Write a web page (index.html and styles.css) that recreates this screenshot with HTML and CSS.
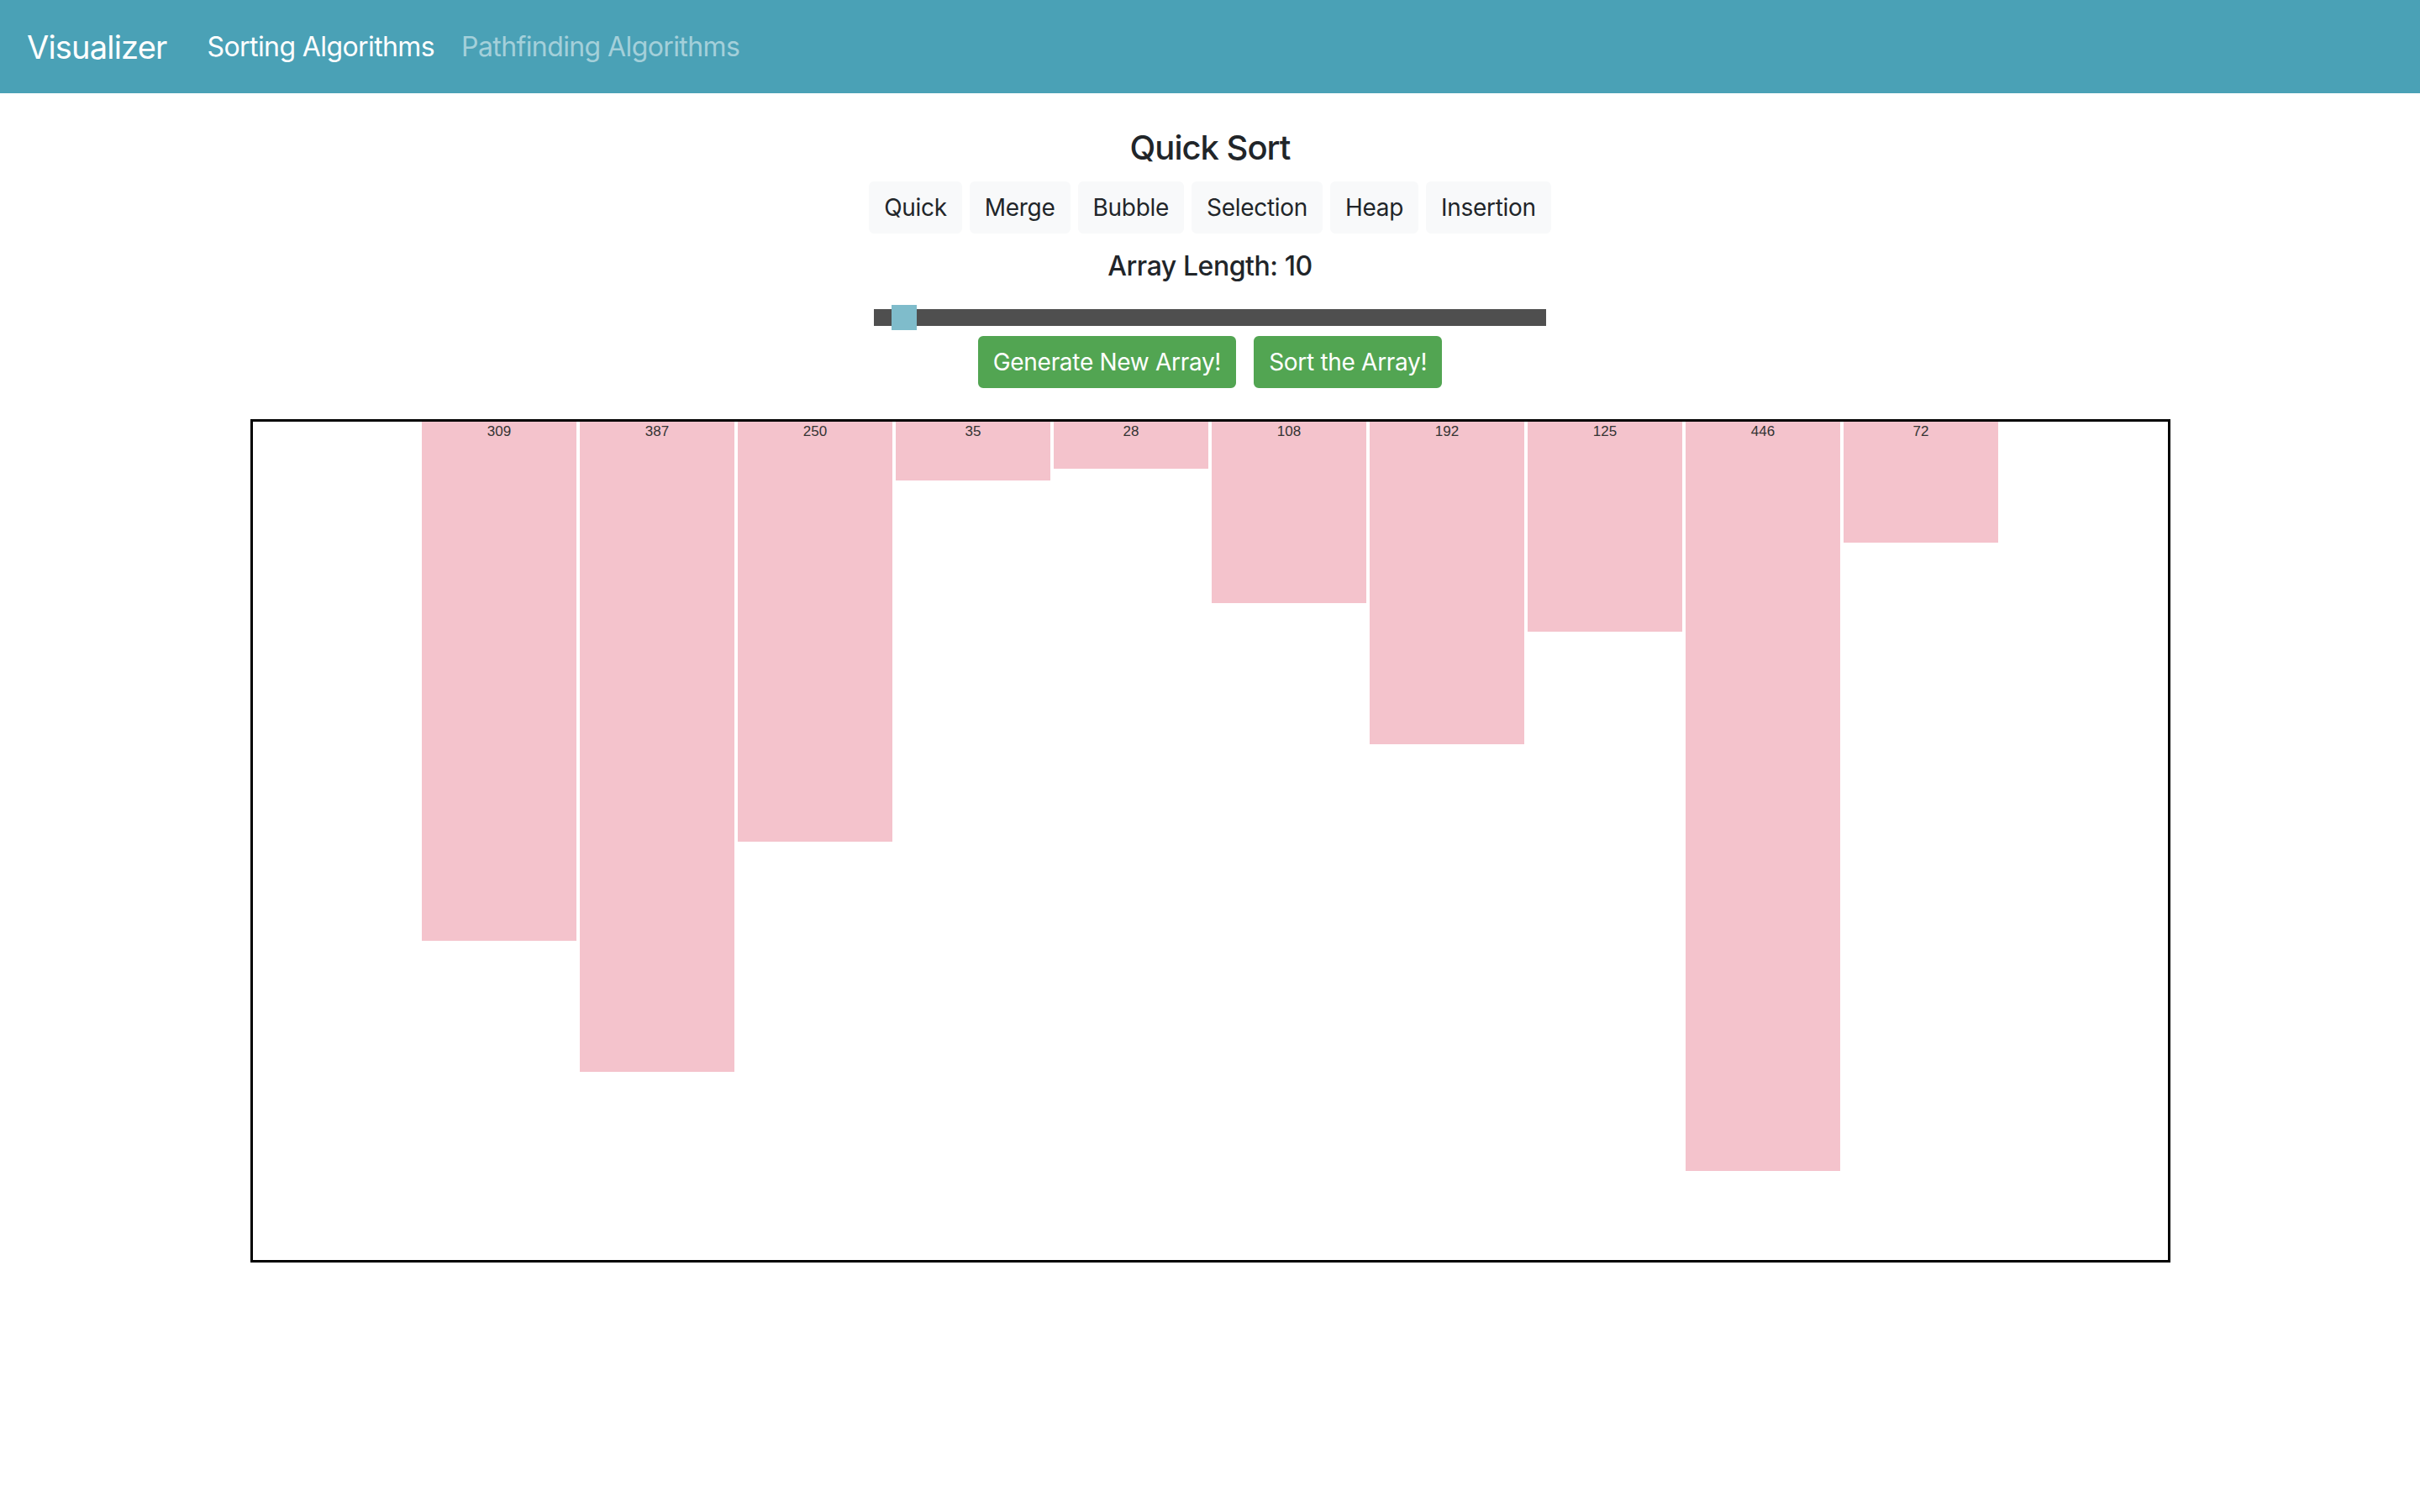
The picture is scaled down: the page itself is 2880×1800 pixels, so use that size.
FILE: index.html
```html
<!DOCTYPE html>
<html lang="en">
<head>
<meta charset="utf-8">
<title>Visualizer</title>
<link rel="stylesheet" href="styles.css">
</head>
<body>
<nav class="navbar">
  <a class="brand" href="#">Visualizer</a>
  <div class="nav-links">
    <a class="nav-link active" href="#">Sorting Algorithms</a>
    <a class="nav-link" href="#">Pathfinding Algorithms</a>
  </div>
</nav>
<main class="content">
  <h5 class="title">Quick Sort</h5>
  <div class="algo-group">
    <button class="btn btn-light">Quick</button>
    <button class="btn btn-light">Merge</button>
    <button class="btn btn-light">Bubble</button>
    <button class="btn btn-light">Selection</button>
    <button class="btn btn-light">Heap</button>
    <button class="btn btn-light">Insertion</button>
  </div>
  <h6 class="len">Array Length: 10</h6>
  <div class="slider-row">
    <input class="slider" type="range" min="2" max="300" value="10">
  </div>
  <div class="actions">
    <button class="btn btn-green">Generate New Array!</button>
    <button class="btn btn-green">Sort the Array!</button>
  </div>
  <div class="chart">
    <div class="bars">
      <div class="bar" style="height:618px"><span class="bar-label">309</span></div>
      <div class="bar" style="height:774px"><span class="bar-label">387</span></div>
      <div class="bar" style="height:500px"><span class="bar-label">250</span></div>
      <div class="bar" style="height:70px"><span class="bar-label">35</span></div>
      <div class="bar" style="height:56px"><span class="bar-label">28</span></div>
      <div class="bar" style="height:216px"><span class="bar-label">108</span></div>
      <div class="bar" style="height:384px"><span class="bar-label">192</span></div>
      <div class="bar" style="height:250px"><span class="bar-label">125</span></div>
      <div class="bar" style="height:892px"><span class="bar-label">446</span></div>
      <div class="bar" style="height:144px"><span class="bar-label">72</span></div>
    </div>
  </div>
</main>
</body>
</html>
```
FILE: styles.css
```css
* {
  box-sizing: border-box;
}

html, body {
  margin: 0;
  padding: 0;
  background: #ffffff;
}

body {
  font-family: "Inter", "Liberation Sans", sans-serif;
  color: #212529;
  font-size: 32px;
}

.navbar {
  height: 111px;
  background: #4aa1b6;
  display: flex;
  align-items: center;
  padding: 0 32px;
}

.brand {
  font-size: 38px;
  letter-spacing: -0.8px;
  color: #ffffff;
  text-decoration: none;
  margin-right: 32px;
  line-height: 60px;
}

.nav-links {
  display: flex;
}

.nav-link {
  font-size: 32px;
  letter-spacing: -0.6px;
  color: rgba(255, 255, 255, 0.5);
  text-decoration: none;
  padding: 0 16px;
  line-height: 48px;
}

.nav-link.active {
  color: #ffffff;
}

.content {
  display: flex;
  flex-direction: column;
  align-items: center;
}

.title {
  margin: 41px 0 0;
  font-size: 40px;
  letter-spacing: -1px;
  line-height: 48px;
  font-weight: 500;
}

.algo-group {
  display: flex;
  gap: 9px;
  margin-top: 16px;
}

.btn {
  font-family: inherit;
  font-size: 28px;
  letter-spacing: -0.3px;
  line-height: 42px;
  padding: 8px 16px;
  border: 2px solid transparent;
  border-radius: 6px;
  cursor: pointer;
}

.btn-light {
  background: #f8f9fa;
  border-color: #f8f9fa;
  color: #212529;
}

.btn-green {
  background: #52a552;
  border-color: #52a552;
  color: #ffffff;
}

.len {
  margin: 15px 0 0;
  font-size: 32px;
  letter-spacing: -0.45px;
  line-height: 48px;
  font-weight: 500;
}

.slider-row {
  margin-top: 22px;
  height: 30px;
  display: flex;
  align-items: center;
}

.slider {
  -webkit-appearance: none;
  appearance: none;
  width: 800px;
  height: 20px;
  margin: 0;
  background: #4f4f4f;
  outline: none;
}

.slider::-webkit-slider-thumb {
  -webkit-appearance: none;
  appearance: none;
  width: 30px;
  height: 30px;
  background: #7fbccb;
  border: none;
  border-radius: 0;
  cursor: pointer;
}

.actions {
  display: flex;
  gap: 21px;
  margin-top: 7px;
}

.chart {
  margin-top: 37px;
  width: 2285px;
  height: 1004px;
  border: 3px solid #000000;
}

.bars {
  display: flex;
  justify-content: center;
  align-items: flex-start;
  gap: 4px;
}

.bar {
  width: 184px;
  background: #f4c3cc;
  display: flex;
  justify-content: center;
}

.bar-label {
  font-family: "Liberation Sans", Arial, sans-serif;
  font-size: 17px;
  line-height: 17px;
  color: #333333;
  margin-top: 3px;
}
```
